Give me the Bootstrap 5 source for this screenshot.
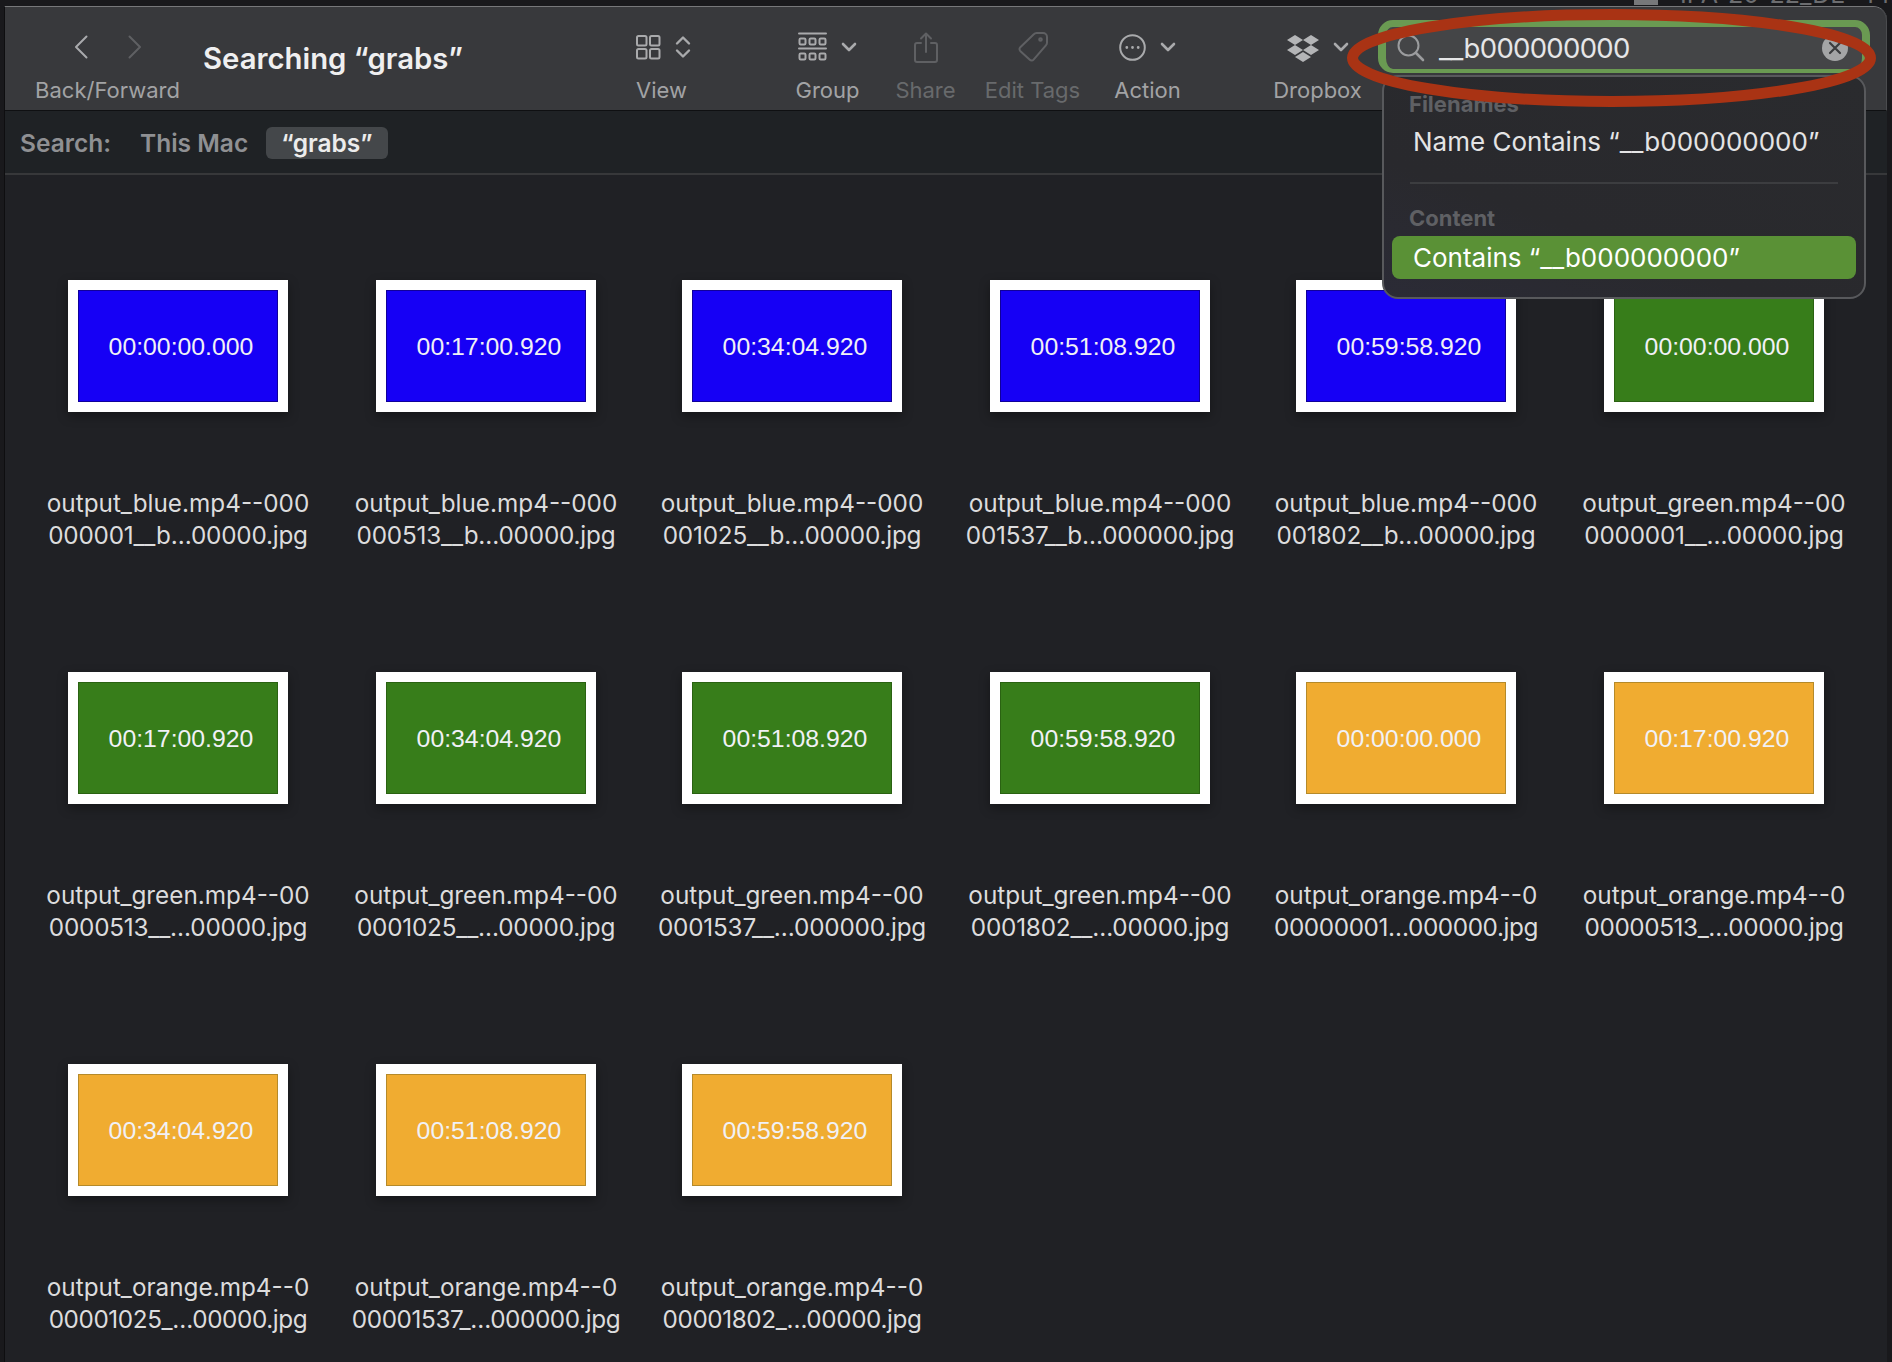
<!DOCTYPE html>
<html lang="en">
  <head>
    <meta charset="UTF-8" />
    <title>Searching "grabs"</title>
    <link
      href="https://cdn.jsdelivr.net/npm/bootstrap@5.3.0/dist/css/bootstrap.min.css"
      rel="stylesheet"
    />
    <style>
      body {
        width: 1892px;
        height: 1362px;
        overflow: hidden;
        background-color: #19191c;
        font-family: Inter, "Liberation Sans", sans-serif;
      }

      /* what shows of the desktop above the window */
      .desk-strip {
        height: 6px;
        gap: 22px;
        color: #6c6d70;
        font-size: 25px;
        line-height: 24px;
      }
      .desk-icon {
        width: 24px;
        height: 5px;
        background-color: #77787a;
      }
      .desk-text {
        width: 212px;
        margin-top: -18px;
        white-space: nowrap;
      }

      .finder {
        width: 1883px;
        height: 1356px;
        margin-left: 4px;
        background-color: #202125;
        border-top: 1px solid #77787a;
        border-left: 1px solid #0e0e10;
        border-top-right-radius: 14px;
        overflow: visible;
      }

      .tool-bar {
        height: 104px;
        background-color: #38393c;
        border-top-right-radius: 14px;
        border-bottom: 1px solid #0f1012;
        border-right: 1px solid #4b4c4f;
      }
      .tool-item {
        padding-top: 23px;
        color: #a2a3a5;
        font-size: 22px;
        line-height: 28px;
      }
      .tool-item.is-off {
        color: #686a6c;
      }
      .tool-icons {
        height: 34px;
        margin-bottom: 12px;
        gap: 14px;
      }
      .tool-icons svg {
        display: block;
        fill: none;
        stroke: #a9aaac;
        stroke-width: 2;
        stroke-linecap: round;
        stroke-linejoin: round;
      }
      .is-off .tool-icons svg {
        stroke: #5f6063;
      }
      .tool-icons .nav-next {
        margin-left: 40px;
        stroke: #5f6063;
      }
      .tool-icons .logo-box {
        margin-top: 2px;
      }
      .tool-icons .logo-box path {
        fill: #b4b5b7;
        stroke: none;
      }
      .item-back { width: 143px; margin-left: 31px; }
      .item-view { width: 123px; }
      .item-group { width: 137px; }
      .item-share { width: 59px; }
      .item-tags { width: 155px; }
      .item-action { width: 75px; }
      .item-dropbox { width: 105px; margin-left: 80px; }

      .win-title {
        width: 433px;
        margin-left: 24px;
        padding-top: 34px;
        color: #efeff0;
        font-size: 29.3px;
        line-height: 36px;
        font-weight: 600;
      }

      .search-ring {
        width: 492px;
        height: 53px;
        margin-top: 13px;
        margin-left: 8px;
        background-color: #444547;
        border: solid #6a9a52;
        border-width: 7px 8px 4px;
        border-radius: 15px;
        padding: 0 14px 0 11px;
        color: #e6e6e7;
        font-size: 27.5px;
      }
      .search-value {
        margin-left: 14px;
        padding-top: 2px;
        letter-spacing: -0.7px;
      }
      .clear-dot {
        width: 26px;
        height: 26px;
        border-radius: 50%;
        background-color: #a4a5a6;
      }

      .scope-bar {
        height: 64px;
        gap: 29px;
        padding: 2px 0 0 15px;
        background-color: #1f2225;
        border-bottom: 2px solid #37383a;
        color: #8f9093;
        font-size: 24.5px;
        font-weight: 600;
      }
      .scope-pill {
        margin-left: -11px;
        padding: 0 15px;
        height: 32px;
        line-height: 32px;
        border-radius: 6px;
        background-color: #44474a;
        color: #ececec;
      }

      .file-grid {
        display: grid;
        grid-template-columns: repeat(3, 308px 306px);
        row-gap: 121px;
        padding: 105px 0 0 19px;
      }
      .file-cell {
        display: flex;
        flex-direction: column;
        align-items: center;
      }
      .file-cell:nth-child(even) {
        padding-left: 2px;
      }
      .thumb-frame {
        width: 220px;
        height: 132px;
        padding: 10px;
        background-color: #fff;
        box-shadow: 0 4px 10px rgba(0, 0, 0, 0.35);
      }
      .thumb-face {
        height: 100%;
        padding: 2px 0 0 6px;
        border: 1px solid;
        color: #f1f1f6;
        font-family: "Liberation Sans", Arial, sans-serif;
        font-size: 24.8px;
      }
      .face-blue { background-color: #1600f5; border-color: #10009a; }
      .face-green { background-color: #377d1a; border-color: #2a6212; }
      .face-orange { background-color: #f0ac31; border-color: #b58a2a; }
      .file-name {
        margin-top: 75px;
        color: #dcdcdd;
        font-size: 24.3px;
        line-height: 32px;
        text-align: center;
        white-space: nowrap;
      }
      .name-tail {
        display: block;
        letter-spacing: -0.2px;
      }
      .tail-orange {
        letter-spacing: -0.4px;
      }

      .search-menu {
        top: 68px;
        left: 1377px;
        width: 484px;
        height: 224px;
        padding: 14px 8px 0;
        background: linear-gradient(20deg, #2b2b36, #29292d 35%, #2a2b2e);
        border: 2px solid #58595c;
        border-radius: 16px;
        color: #e4e4e5;
        font-size: 26px;
        line-height: 30px;
      }
      .menu-head {
        padding-left: 17px;
        color: #5f6064;
        font-size: 22px;
        line-height: 26px;
        font-weight: 700;
      }
      .menu-row {
        padding-left: 21px;
        margin-top: 10px;
      }
      .menu-rule {
        height: 2px;
        margin: 25px 18px 21px;
        background-color: #3c3d40;
      }
      .menu-hit {
        height: 43px;
        margin-top: 5px;
        line-height: 43px;
        border-radius: 8px;
        background-color: #5a9136;
        color: #fff;
      }

      .red-circle {
        top: 1px;
        left: 1341px;
        pointer-events: none;
      }
    </style>
  </head>
  <body>
    <div class="desk-strip d-flex justify-content-end overflow-hidden">
      <div class="desk-icon"></div>
      <div class="desk-text overflow-hidden">IPA-20-22_DE &nbsp;4 mo</div>
    </div>

    <div class="finder position-relative">
      <!-- Toolbar -->
      <div class="tool-bar d-flex">
        <div class="tool-item item-back d-flex flex-column align-items-center">
          <div class="tool-icons d-flex align-items-center gap-0">
            <svg width="14" height="24" viewBox="0 0 14 24"><path d="M12.5 1.5 2 12l10.5 10.5" /></svg>
            <svg class="nav-next" width="14" height="24" viewBox="0 0 14 24"><path d="M1.5 1.5 12 12 1.5 22.5" /></svg>
          </div>
          <span>Back/Forward</span>
        </div>

        <div class="win-title">Searching “grabs”</div>

        <div class="tool-item item-view d-flex flex-column">
          <div class="tool-icons d-flex align-items-center">
            <svg width="25" height="25" viewBox="0 0 25 25">
              <rect x="1" y="1" width="9.5" height="9.5" rx="1.5" />
              <rect x="14" y="1" width="9.5" height="9.5" rx="1.5" />
              <rect x="1" y="14" width="9.5" height="9.5" rx="1.5" />
              <rect x="14" y="14" width="9.5" height="9.5" rx="1.5" />
            </svg>
            <svg width="16" height="24" viewBox="0 0 16 24">
              <path stroke-width="2.4" d="M2 8.5 8 2.5l6 6M2 15.5l6 6 6-6" />
            </svg>
          </div>
          <span>View</span>
        </div>

        <div class="tool-item item-group d-flex flex-column align-items-center">
          <div class="tool-icons d-flex align-items-center">
            <svg width="29" height="30" viewBox="0 0 29 30">
              <path d="M1 1.5h27M1 16.5h27" />
              <rect x="1.5" y="6.5" width="6" height="6" rx="1.2" />
              <rect x="11.5" y="6.5" width="6" height="6" rx="1.2" />
              <rect x="21.5" y="6.5" width="6" height="6" rx="1.2" />
              <rect x="1.5" y="21.5" width="6" height="6" rx="1.2" />
              <rect x="11.5" y="21.5" width="6" height="6" rx="1.2" />
              <rect x="21.5" y="21.5" width="6" height="6" rx="1.2" />
            </svg>
            <svg width="16" height="10" viewBox="0 0 16 10"><path stroke-width="2.6" d="M2 2l6 6 6-6" /></svg>
          </div>
          <span>Group</span>
        </div>

        <div class="tool-item is-off item-share d-flex flex-column align-items-center">
          <div class="tool-icons d-flex align-items-center">
            <svg width="24" height="31" viewBox="0 0 24 31">
              <path d="M7 11H3a2 2 0 0 0-2 2v15a2 2 0 0 0 2 2h18a2 2 0 0 0 2-2V13a2 2 0 0 0-2-2h-4" />
              <path d="M12 20V1.5M7 6.5l5-5 5 5" />
            </svg>
          </div>
          <span>Share</span>
        </div>

        <div class="tool-item is-off item-tags d-flex flex-column align-items-center">
          <div class="tool-icons d-flex align-items-center">
            <svg width="30" height="30" viewBox="0 0 30 30">
              <path d="M2.3 15.2 15.8 2.2A4 4 0 0 1 18.6 1H25a4 4 0 0 1 4 4v5.6a4 4 0 0 1-1.1 2.8L15.6 27.7a2.6 2.6 0 0 1-3.8.1L2.2 18.9a2.6 2.6 0 0 1 .1-3.7z" />
              <circle cx="22.5" cy="7.5" r="1.3" />
            </svg>
          </div>
          <span>Edit Tags</span>
        </div>

        <div class="tool-item item-action d-flex flex-column align-items-center">
          <div class="tool-icons d-flex align-items-center">
            <svg width="27" height="27" viewBox="0 0 27 27">
              <circle cx="13.5" cy="13.5" r="12.3" />
              <path stroke-width="2.8" d="M7.8 13.5h.01M13.5 13.5h.01M19.2 13.5h.01" />
            </svg>
            <svg width="16" height="10" viewBox="0 0 16 10"><path stroke-width="2.6" d="M2 2l6 6 6-6" /></svg>
          </div>
          <span>Action</span>
        </div>

        <div class="tool-item item-dropbox d-flex flex-column align-items-center">
          <div class="tool-icons d-flex align-items-center">
            <svg class="logo-box" width="32" height="27" viewBox="0 0 32 27">
              <path d="M8 0l8 5-8 5-8-5zM24 0l8 5-8 5-8-5zM8 10l8 5-8 5-8-5zM24 10l8 5-8 5-8-5zM16 17l8 5-8 5-8-5z" />
            </svg>
            <svg width="16" height="10" viewBox="0 0 16 10"><path stroke-width="2.6" d="M2 2l6 6 6-6" /></svg>
          </div>
          <span>Dropbox</span>
        </div>

        <div class="search-ring d-flex align-items-center">
          <svg width="28" height="28" viewBox="0 0 28 28" fill="none" stroke="#9b9c9e" stroke-width="2" stroke-linecap="round">
            <circle cx="11.5" cy="11.5" r="10" />
            <path stroke-width="2.6" d="M19 19l7 7" />
          </svg>
          <span class="search-value flex-grow-1">__b000000000</span>
          <div class="clear-dot d-flex align-items-center justify-content-center">
            <svg width="14" height="14" viewBox="0 0 14 14" stroke="#3b3c3e" stroke-width="2.2" stroke-linecap="round">
              <path d="M2 2l10 10M12 2 2 12" />
            </svg>
          </div>
        </div>
      </div>

      <!-- Search scope -->
      <div class="scope-bar d-flex align-items-center">
        <span>Search:</span>
        <span>This Mac</span>
        <span class="scope-pill">“grabs”</span>
      </div>

      <div class="file-grid" id="fileGrid"></div>

      <!-- Suggestions -->
      <div class="search-menu position-absolute">
        <div class="menu-head">Filenames</div>
        <div class="menu-row">Name Contains “__b000000000”</div>
        <div class="menu-rule"></div>
        <div class="menu-head">Content</div>
        <div class="menu-row menu-hit">Contains “__b000000000”</div>
      </div>

      <!-- Red annotation round the search field -->
      <svg class="red-circle position-absolute" width="540" height="106" viewBox="0 0 540 106" fill="none">
        <ellipse cx="265.5" cy="50" rx="259" ry="43.5" stroke="#a93314" stroke-width="11" />
      </svg>
    </div>

    <script>
      const files = [
        ["blue", "00:00:00.000", "output_blue.mp4--000", "000001__b…00000.jpg"],
        ["blue", "00:17:00.920", "output_blue.mp4--000", "000513__b…00000.jpg"],
        ["blue", "00:34:04.920", "output_blue.mp4--000", "001025__b…00000.jpg"],
        ["blue", "00:51:08.920", "output_blue.mp4--000", "001537__b…000000.jpg"],
        ["blue", "00:59:58.920", "output_blue.mp4--000", "001802__b…00000.jpg"],
        ["green", "00:00:00.000", "output_green.mp4--00", "0000001__…00000.jpg"],
        ["green", "00:17:00.920", "output_green.mp4--00", "0000513__…00000.jpg"],
        ["green", "00:34:04.920", "output_green.mp4--00", "0001025__…00000.jpg"],
        ["green", "00:51:08.920", "output_green.mp4--00", "0001537__…000000.jpg"],
        ["green", "00:59:58.920", "output_green.mp4--00", "0001802__…00000.jpg"],
        ["orange", "00:00:00.000", "output_orange.mp4--0", "00000001…000000.jpg"],
        ["orange", "00:17:00.920", "output_orange.mp4--0", "00000513_…00000.jpg"],
        ["orange", "00:34:04.920", "output_orange.mp4--0", "00001025_…00000.jpg"],
        ["orange", "00:51:08.920", "output_orange.mp4--0", "00001537_…000000.jpg"],
        ["orange", "00:59:58.920", "output_orange.mp4--0", "00001802_…00000.jpg"],
      ];

      const grid = document.getElementById("fileGrid");
      files.forEach(([colour, time, line1, line2]) => {
        const cell = document.createElement("div");
        cell.className = "file-cell";
        cell.innerHTML = `
          <div class="thumb-frame">
            <div class="thumb-face face-${colour} d-flex align-items-center justify-content-center">${time}</div>
          </div>
          <div class="file-name">${line1}<span class="name-tail tail-${colour}">${line2}</span></div>
        `;
        grid.appendChild(cell);
      });
    </script>
  </body>
</html>
